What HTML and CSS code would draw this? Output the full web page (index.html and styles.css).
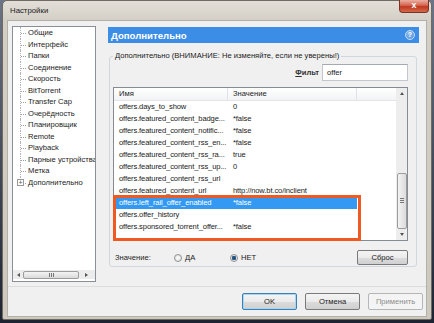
FILE: index.html
```html
<!DOCTYPE html>
<html lang="ru">

<head>
    <meta charset="UTF-8">
    <title>Настройки</title>
    <link rel="stylesheet" href="styles.css">
</head>

<body>
    <div class="window">
        <div class="titlebar">
            <span class="title">Настройки</span>
            <div class="close-btn">x</div>
        </div>

        <div class="client">
            <div class="main">
                <!-- left tree -->
                <div class="tree">
                    <ul class="tree-list">
                        <li>Общие</li>
                        <li>Интерфейс</li>
                        <li>Папки</li>
                        <li>Соединение</li>
                        <li>Скорость</li>
                        <li>BitTorrent</li>
                        <li>Transfer Cap</li>
                        <li>Очерёдность</li>
                        <li>Планировщик</li>
                        <li>Remote</li>
                        <li>Playback</li>
                        <li>Парные устройства</li>
                        <li>Метка</li>
                        <li class="last"><span class="expander">+</span>Дополнительно</li>
                    </ul>
                    <div class="hscroll">
                        <span class="arrow-left"></span>
                        <div class="hthumb"><span class="grip-v"></span></div>
                        <span class="arrow-right"></span>
                    </div>
                </div>

                <!-- right pane -->
                <div class="pane">
                    <div class="pane-head">
                        <span>Дополнительно</span>
                        <span class="help">?</span>
                    </div>

                    <fieldset class="group">
                        <legend>Дополнительно (ВНИМАНИЕ: Не изменяйте, если не уверены!)</legend>

                        <div class="filter-row">
                            <label class="filter-label"><u>Ф</u>ильт</label>
                            <div class="filter-input">offer</div>
                        </div>

                        <div class="listbox">
                            <div class="list-content">
                                <div class="list-row list-head">
                                    <div class="cell">Имя</div>
                                    <div class="cell">Значение</div>
                                    <div class="cell"></div>
                                </div>
                                <div class="list-row"><div class="cell">offers.days_to_show</div><div class="cell">0</div><div class="cell"></div></div>
                                <div class="list-row"><div class="cell">offers.featured_content_badge...</div><div class="cell">*false</div><div class="cell"></div></div>
                                <div class="list-row"><div class="cell">offers.featured_content_notific...</div><div class="cell">*false</div><div class="cell"></div></div>
                                <div class="list-row"><div class="cell">offers.featured_content_rss_en...</div><div class="cell">*false</div><div class="cell"></div></div>
                                <div class="list-row"><div class="cell">offers.featured_content_rss_ra...</div><div class="cell">true</div><div class="cell"></div></div>
                                <div class="list-row"><div class="cell">offers.featured_content_rss_up...</div><div class="cell">0</div><div class="cell"></div></div>
                                <div class="list-row"><div class="cell">offers.featured_content_rss_url</div><div class="cell"></div><div class="cell"></div></div>
                                <div class="list-row"><div class="cell">offers.featured_content_url</div><div class="cell">http://now.bt.co/inclient</div><div class="cell"></div></div>
                                <div class="list-row selected"><div class="cell">offers.left_rail_offer_enabled</div><div class="cell">*false</div><div class="cell"></div></div>
                                <div class="list-row"><div class="cell">offers.offer_history</div><div class="cell"></div><div class="cell"></div></div>
                                <div class="list-row"><div class="cell">offers.sponsored_torrent_offer...</div><div class="cell">*false</div><div class="cell"></div></div>

                                <div class="mark-box"></div>
                            </div>
                            <div class="vscroll">
                                <span class="arrow-up"></span>
                                <div class="vthumb"><span class="grip-h"></span></div>
                                <span class="arrow-down"></span>
                            </div>
                        </div>

                        <div class="value-row">
                            <span class="value-label">Значение:</span>
                            <span class="radio-item yes"><span class="radio"></span>ДА</span>
                            <span class="radio-item"><span class="radio checked"></span>НЕТ</span>
                            <span class="btn reset-btn">Сброс</span>
                        </div>
                    </fieldset>
                </div>
            </div>

            <div class="footer">
                <span class="btn btn-default">OK</span>
                <span class="btn">Отмена</span>
                <span class="btn btn-disabled">Применить</span>
            </div>
        </div>
    </div>
</body>

</html>
```

FILE: styles.css
```css
* {
    box-sizing: border-box;
}

body {
    margin: 0;
    width: 434px;
    height: 323px;
    overflow: hidden;
    background: linear-gradient(#6b7587, #1d2331);
    font-family: "Liberation Sans", Arial, sans-serif;
    font-size: 7.6px;
    color: #1b1b1b;
}

.window {
    margin-left: 2px;
    width: 430px;
    height: 320px;
    display: flex;
    flex-direction: column;
    padding: 0 4px 2px 4px;
    background: linear-gradient(#e2dfd8, #d3cfc6 20px, #cdc9bf);
    border: 1px solid #6f6b63;
    border-radius: 5px 5px 2px 2px;
}

.titlebar {
    height: 19px;
    display: flex;
    align-items: flex-start;
    justify-content: space-between;
}

.title {
    line-height: 19px;
    padding-left: 3px;
    font-size: 7.8px;
    color: #1a1a1a;
}

.close-btn {
    width: 30px;
    height: 13px;
    margin-top: -1px;
    margin-right: -2px;
    border: 1px solid #7a3326;
    border-top: none;
    border-radius: 0 0 4px 4px;
    background: linear-gradient(#eab0a2, #d4644e 45%, #c0391f 55%, #d46a4c);
    color: #fff;
    font-weight: bold;
    font-size: 9px;
    text-align: center;
    line-height: 10px;
}

.client {
    flex: 1;
    background: #f0f0f0;
    border: 1px solid #b3b0a8;
    display: flex;
    flex-direction: column;
}

.main {
    display: flex;
    padding: 5px 0 0 4px;
    height: 261px;
}

/* tree */

.tree {
    width: 84px;
    height: 256px;
    background: #fff;
    border: 1px solid #8a8e96;
    display: flex;
    flex-direction: column;
    overflow: hidden;
}

.tree-list {
    flex: 1;
    list-style: none;
    margin: 0;
    padding: 0;
}

.tree-list li {
    position: relative;
    height: 11.5px;
    line-height: 11.5px;
    padding-left: 15px;
    white-space: nowrap;
}

.tree-list li::before {
    content: "";
    position: absolute;
    left: 7px;
    top: 0;
    bottom: 0;
    border-left: 1px dotted #b4b4b4;
}

.tree-list li::after {
    content: "";
    position: absolute;
    left: 8px;
    top: 6px;
    width: 5px;
    border-top: 1px dotted #a0a0a0;
}

.tree-list li.last::before {
    bottom: 50%;
}

.expander {
    position: absolute;
    left: 4px;
    top: 2px;
    width: 7px;
    height: 7px;
    border: 1px solid #9a9a9a;
    background: #fff;
    font-size: 7px;
    line-height: 5px;
    text-align: center;
    color: #555;
    z-index: 1;
}

.hscroll {
    height: 9px;
    margin: 0 0 2px 0;
    display: flex;
    align-items: center;
    background: #ececec;
}

.arrow-left,
.arrow-right {
    width: 10px;
    display: flex;
    justify-content: center;
}

.arrow-left::before {
    content: "";
    border: 2px solid transparent;
    border-right: 3px solid #555;
    border-left: none;
}

.arrow-right::before {
    content: "";
    border: 2px solid transparent;
    border-left: 3px solid #555;
    border-right: none;
}

.hthumb {
    width: 56px;
    height: 8px;
    margin-right: 2px;
    border: 1px solid #9c9c9c;
    border-radius: 2px;
    background: linear-gradient(#f3f3f3, #dadada);
    display: flex;
    justify-content: center;
    align-items: center;
}

.grip-v {
    width: 5px;
    height: 4px;
    border-left: 1px solid #777;
    border-right: 1px solid #777;
    background: linear-gradient(to right, transparent 1px, #777 1px, #777 2px, transparent 2px);
}

/* right pane */

.pane {
    width: 311px;
    margin-left: 12px;
}

.pane-head {
    margin-top: 1px;
    height: 16px;
    background: #3b8de6;
    color: #fff;
    font-weight: bold;
    font-size: 9.6px;
    padding: 0 4px 0 3px;
    display: flex;
    align-items: center;
    justify-content: space-between;
}

.help {
    width: 10px;
    height: 10px;
    border-radius: 50%;
    border: 1px solid #c6dcf6;
    background: radial-gradient(circle at 40% 35%, #8ebcf0, #4f8fdc);
    color: #fff;
    font-size: 7px;
    line-height: 8px;
    text-align: center;
}

.group {
    margin: 8px 2px 0 1px;
    min-width: 0;
    padding: 0 8px 1px 3px;
    border: 1px solid #d0d8dd;
    border-radius: 3px;
}

.group legend {
    padding: 0 2px;
    line-height: 10px;
    color: #1b1b1b;
}

.filter-row {
    margin-top: 3px;
    height: 17px;
    display: flex;
    justify-content: flex-end;
    align-items: center;
}

.filter-label {
    font-weight: bold;
    margin-right: 3px;
    color: #333;
}

.filter-input {
    width: 86px;
    height: 17px;
    background: #fff;
    border: 1px solid #c3c6cc;
    border-top-color: #a5a9b1;
    padding-left: 4px;
    line-height: 15px;
}

/* listbox */

.listbox {
    margin-top: 6px;
    height: 154px;
    background: #fff;
    border: 1px solid #868a92;
    display: flex;
}

.list-content {
    flex: 1;
    position: relative;
}

.list-row {
    display: grid;
    grid-template-columns: 114px 129px 1fr;
    height: 12px;
    line-height: 12px;
}

.list-row .cell {
    padding-left: 5px;
    white-space: nowrap;
    letter-spacing: -0.12px;
}

.list-head {
    height: 13px;
    line-height: 12px;
    background: linear-gradient(#fff, #f2f3f5);
    border-bottom: 1px solid #e2e4e8;
}

.list-head .cell {
    border-right: 1px solid #e0e2e6;
    letter-spacing: 0;
}

.list-head .cell:last-child {
    border-right: none;
}

.list-row.selected .cell:nth-child(-n+2) {
    background: #3399f3;
    color: #fff;
}

.mark-box {
    position: absolute;
    left: -1px;
    top: 107px;
    width: 248px;
    height: 46px;
    border: 3px solid #ee5a21;
}

.vscroll {
    width: 11px;
    background: #ededed;
    display: flex;
    flex-direction: column;
    align-items: center;
}

.arrow-up,
.arrow-down {
    height: 11px;
    display: flex;
    align-items: center;
}

.arrow-up::before {
    content: "";
    border: 2px solid transparent;
    border-bottom: 3px solid #555;
    border-top: none;
}

.arrow-down::before {
    content: "";
    border: 2px solid transparent;
    border-top: 3px solid #555;
    border-bottom: none;
}

.vthumb {
    width: 10px;
    height: 59px;
    margin-top: 74px;
    margin-bottom: auto;
    border: 1px solid #9c9c9c;
    border-radius: 2px;
    background: linear-gradient(to right, #f3f3f3, #dcdcdc);
    display: flex;
    justify-content: center;
    align-items: center;
}

.grip-h {
    width: 4px;
    height: 5px;
    border-top: 1px solid #777;
    border-bottom: 1px solid #777;
    background: linear-gradient(transparent 1px, #777 1px, #777 2px, transparent 2px);
}

/* value row */

.value-row {
    margin-top: 9px;
    height: 15px;
    display: flex;
    align-items: center;
}

.value-label {
    width: 61px;
    padding-left: 2px;
}

.radio-item {
    display: flex;
    align-items: center;
    gap: 3px;
}

.radio-item.yes {
    width: 56px;
}

.radio {
    width: 8px;
    height: 8px;
    border-radius: 50%;
    border: 1px solid #8e9296;
    background: radial-gradient(#ffffff, #d8d8d8);
}

.radio.checked {
    background: radial-gradient(#1f4f7a 30%, #5d87ad 55%, #e4e4e4 60%);
}

.btn {
    display: inline-block;
    height: 17px;
    line-height: 15px;
    text-align: center;
    border: 1px solid #7a7a7a;
    border-radius: 2px;
    background: linear-gradient(#f4f4f4, #ebebeb 50%, #dcdcdc 51%, #d0d0d0);
    color: #1b1b1b;
}

.reset-btn {
    margin-left: auto;
    width: 51px;
    height: 15px;
    line-height: 13px;
}

/* footer */

.footer {
    margin-top: 4px;
    border-top: 1px solid #dcdcdc;
    padding: 6px 3px 0 0;
    display: flex;
    justify-content: flex-end;
    gap: 8px;
}

.footer .btn {
    width: 55px;
}

.btn-default {
    border-color: #3c7fb1;
    box-shadow: inset 0 0 0 1px #a6d6f4;
}

.btn-disabled {
    border-color: #b3b6b8;
    background: #f4f4f4;
    color: #8d8d8d;
}
```
